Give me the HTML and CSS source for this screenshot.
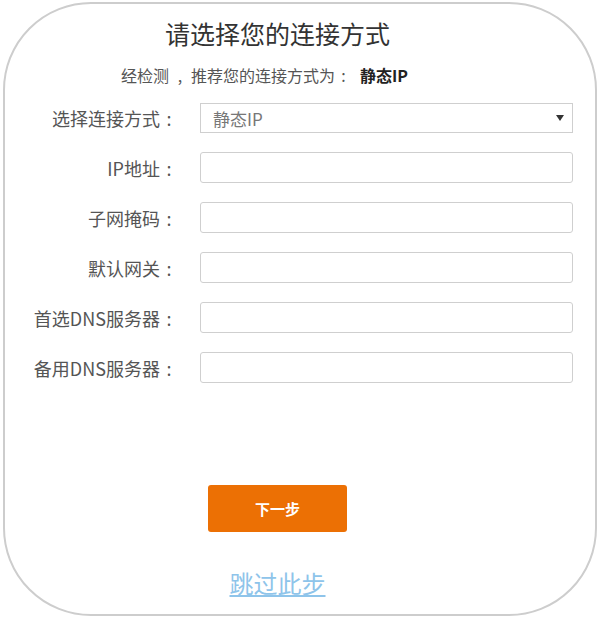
FILE: index.html
```html
<!DOCTYPE html>
<html lang="zh-CN">
<head>
<meta charset="utf-8">
<title>请选择您的连接方式</title>
<link rel="stylesheet" href="styles.css">
</head>
<body>
<div class="card">
  <div class="head">
    <h1 class="title">请选择您的连接方式</h1>
    <p class="hint">经检测<span class="comma">,</span>推荐您的连接方式为<span class="hcolon">:</span><b>静态IP</b></p>
  </div>
  <div class="form">
    <label class="lbl">选择连接方式<span class="colon">:</span></label>
    <div class="select">
      <span class="select-text">静态IP</span>
      <svg class="arrow" width="8" height="6" viewBox="0 0 8 6"><path d="M0 0H8L4 6Z" fill="#333"/></svg>
    </div>
    <label class="lbl">IP地址<span class="colon">:</span></label>
    <input class="field" type="text">
    <label class="lbl">子网掩码<span class="colon">:</span></label>
    <input class="field" type="text">
    <label class="lbl">默认网关<span class="colon">:</span></label>
    <input class="field" type="text">
    <label class="lbl">首选DNS服务器<span class="colon">:</span></label>
    <input class="field" type="text">
    <label class="lbl">备用DNS服务器<span class="colon">:</span></label>
    <input class="field" type="text">
  </div>
  <div class="actions">
    <button class="next" type="button">下一步</button>
    <a class="skip" href="#">跳过此步</a>
  </div>
</div>
</body>
</html>
```
FILE: styles.css
```css
* { box-sizing: border-box; }
html, body { margin: 0; padding: 0; background: #fff; }
body {
  font-family: "Noto Sans CJK SC", "Noto Sans", "Liberation Sans", sans-serif;
  width: 600px;
  height: 619px;
  overflow: hidden;
}
.card {
  margin: 2px 3px 0 3px;
  width: 594px;
  height: 614px;
  border: 2px solid #cdcdcd;
  border-radius: 88px;
  background: #fff;
}
.head {
  width: 545px;
  text-align: center;
  padding-top: 14px;
}
.title {
  margin: 0;
  font-size: 25px;
  line-height: 30px;
  font-weight: normal;
  color: #333;
}
.hint {
  margin: 17px 0 0 0;
  font-size: 16px;
  line-height: 20px;
  color: #555;
  padding-right: 26px;
}
.comma {
  display: inline-block;
  width: 22px;
  text-align: center;
}
.hcolon {
  display: inline-block;
  width: 17px;
  text-align: center;
  margin-right: 8px;
}
.hint b { color: #222; font-weight: bold; }
.form {
  margin-top: 18px;
  display: grid;
  grid-template-columns: 175px 373px;
  column-gap: 20px;
  row-gap: 19px;
  align-items: center;
}
.lbl {
  text-align: right;
  font-size: 18px;
  color: #555;
  line-height: 24px;
  white-space: nowrap;
}
.colon {
  display: inline-block;
  width: 18px;
  text-align: center;
  margin-right: 2px;
}
.select {
  height: 30px;
  border: 1px solid #cfcfcf;
  display: flex;
  align-items: center;
  justify-content: space-between;
  padding: 0 8px 0 12px;
}
.select-text {
  font-size: 17px;
  color: #777;
}
.arrow { display: block; }
.field {
  height: 31px;
  border: 1px solid #cfcfcf;
  border-radius: 3px;
  margin: 0;
  padding: 0 8px;
  font: inherit;
  background: #fff;
}
.actions {
  width: 545px;
  display: flex;
  flex-direction: column;
  align-items: center;
  margin-top: 102px;
}
.next {
  width: 139px;
  height: 47px;
  border: none;
  border-radius: 3px;
  background: #ec7004;
  color: #fff;
  font-family: inherit;
  font-size: 15px;
  font-weight: bold;
  padding: 0;
}
.skip {
  margin-top: 36px;
  font-size: 24px;
  line-height: 30px;
  color: #8ec4ea;
  text-decoration: underline;
}
```
